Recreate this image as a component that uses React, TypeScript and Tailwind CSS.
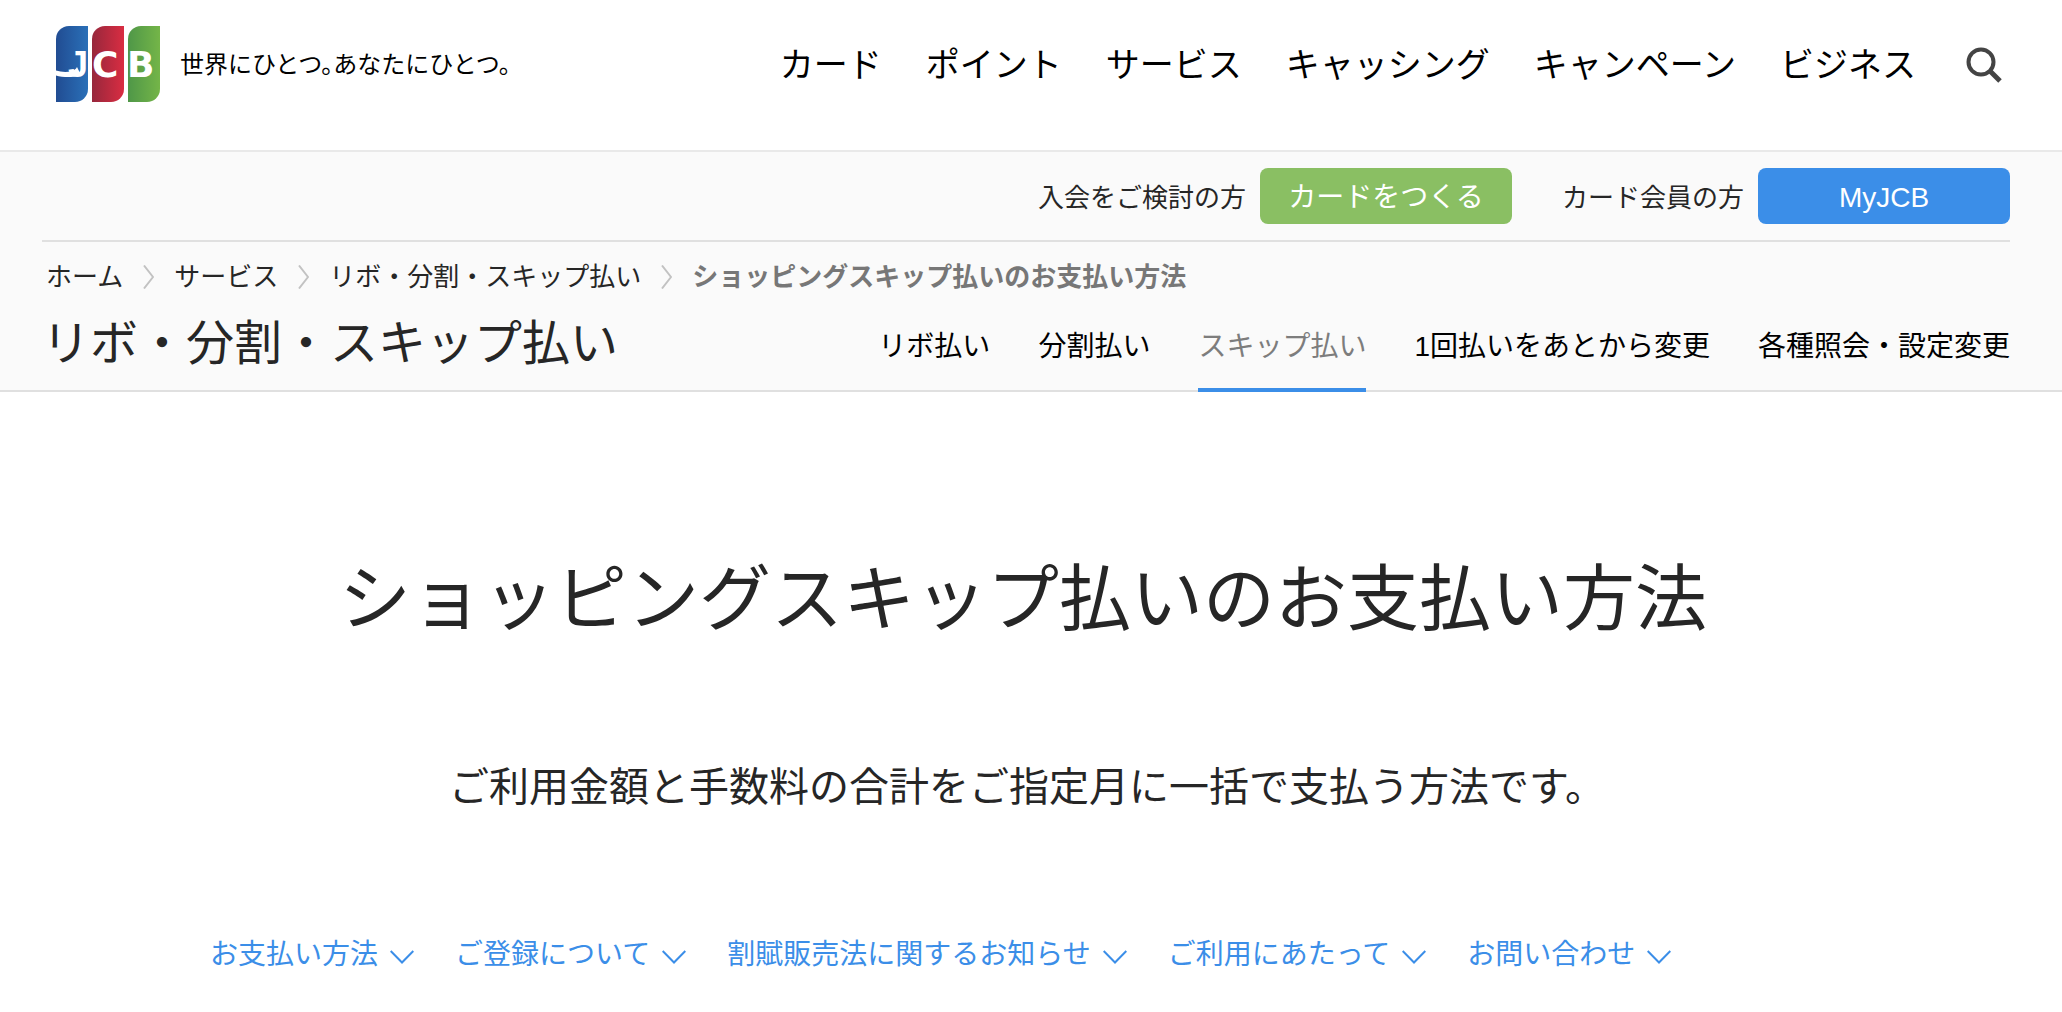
import { Fragment, type ReactNode } from "react";

const mainNav = ["カード", "ポイント", "サービス", "キャッシング", "キャンペーン", "ビジネス"];
const crumbs = ["ホーム", "サービス", "リボ・分割・スキップ払い"];
const tabs = ["リボ払い", "分割払い", "スキップ払い", "1回払いをあとから変更", "各種照会・設定変更"];
const anchors = [
  "お支払い方法",
  "ご登録について",
  "割賦販売法に関するお知らせ",
  "ご利用にあたって",
  "お問い合わせ",
];

function Gradient({ id, from, to }: { id: string; from: string; to: string }) {
  return (
    <linearGradient id={id} x1="0" x2="1" y1="0" y2="0">
      <stop offset="0" stopColor={from} />
      <stop offset="1" stopColor={to} />
    </linearGradient>
  );
}

function Logo() {
  return (
    <svg
      width="104"
      height="76"
      viewBox="0 0 104 76"
      role="img"
      aria-label="JCB"
      className="shrink-0 text-[36px] font-bold"
      fill="#fff"
    >
      <defs>
        <Gradient id="logo-blue" from="#214c92" to="#2a70b8" />
        <Gradient id="logo-red" from="#97273c" to="#d92d42" />
        <Gradient id="logo-green" from="#4f9748" to="#74b548" />
      </defs>
      <path d="M13 0h19v63a13 13 0 0 1-13 13H0V13A13 13 0 0 1 13 0Z" fill="url(#logo-blue)" />
      <path d="M49 0h19v63a13 13 0 0 1-13 13H36V13A13 13 0 0 1 49 0Z" fill="url(#logo-red)" />
      <path d="M85 0h19v63a13 13 0 0 1-13 13H72V13A13 13 0 0 1 85 0Z" fill="url(#logo-green)" />
      <path d="M0 44.500c5 1.500 11 2 16 .5 2-.6 4-2 5-4l3 6c-2 3-5 4-9 4-5 .3-11-.3-15-1.500Z" />
      <text x="12" y="51" className="font-['Liberation_Sans']">J</text>
      <text x="36" y="51" className="font-['DejaVu_Sans']">C</text>
      <text x="71" y="51" className="font-['DejaVu_Sans']">B</text>
    </svg>
  );
}

function Separator() {
  return (
    <svg width="11" height="24" viewBox="0 0 11 24" fill="none" stroke="#c2c2c2" strokeWidth="2" aria-hidden="true">
      <path d="M1 .5 10 12 1 23.500" />
    </svg>
  );
}

function ChevronDown() {
  return (
    <svg width="24" height="14" viewBox="0 0 24 14" fill="none" stroke="#3b8ee8" strokeWidth="2" aria-hidden="true" className="mt-1">
      <path d="M.7 1 12 12.500 23.300 1" />
    </svg>
  );
}

function Entry({ label, children, color }: { label: string; children: ReactNode; color: string }) {
  return (
    <div className="flex items-center gap-3.5">
      <span className="pt-1 text-[26px] leading-9">{label}</span>
      <a href="#" className={`flex h-14 w-[252px] items-center justify-center rounded-lg pt-1 text-[28px] text-white ${color}`}>
        {children}
      </a>
    </div>
  );
}

export default function App() {
  return (
    <div
      lang="ja"
      className="min-h-screen bg-white font-['Liberation_Sans','Noto_Sans_CJK_JP',sans-serif] whitespace-nowrap text-[#262626]"
    >
      <header>
        <div className="flex h-[150px] items-start justify-between pr-[60px] pl-14">
          <a href="#" className="mt-[26px] flex items-center gap-5 text-black">
            <Logo />
            <span className="pt-0.5 text-[24px] leading-9 [font-feature-settings:'halt']">世界にひとつ。あなたにひとつ。</span>
          </a>
          <div className="mt-[41px] flex items-center gap-[50px]">
            <nav aria-label="メイン">
              <ul className="flex gap-11 text-[34px] leading-[48px] text-black">
                {mainNav.map((item) => (
                  <li key={item}>
                    <a href="#">{item}</a>
                  </li>
                ))}
              </ul>
            </nav>
            <button type="button" aria-label="検索">
              <svg width="36" height="36" viewBox="0 0 36 36" fill="none" stroke="#444" strokeWidth="4">
                <circle cx="15" cy="15" r="12.500" />
                <path d="m24 24 10 10" strokeWidth="5" />
              </svg>
            </button>
          </div>
        </div>

        <div className="border-y-2 border-t-[#e9e9e9] border-b-[#e0e0e0] bg-[#fafafa] pr-[52px] pl-[42px]">
          <div className="flex justify-end gap-[50px] border-b-2 border-[#e0e0e0] py-4">
            <Entry label="入会をご検討の方" color="bg-[#8abf63]">
              カードをつくる
            </Entry>
            <Entry label="カード会員の方" color="bg-[#3b8ee8]">
              MyJCB
            </Entry>
          </div>

          <nav aria-label="パンくず" className="flex h-[68px] items-center gap-5 pt-0.5 pl-1 text-[26px] leading-9">
            {crumbs.map((item) => (
              <Fragment key={item}>
                <a href="#">{item}</a>
                <Separator />
              </Fragment>
            ))}
            <span aria-current="page" className="font-bold text-[#777]">
              ショッピングスキップ払いのお支払い方法
            </span>
          </nav>

          <div className="flex h-20 items-end justify-between">
            <p className="pb-4 text-[48px] leading-[60px]">リボ・分割・スキップ払い</p>
            <nav aria-label="お支払い" className="-mb-0.5 flex gap-12 text-[28px] leading-9 text-black">
              {tabs.map((item) => (
                <a
                  key={item}
                  href="#"
                  className={
                    item === "スキップ払い"
                      ? "border-b-4 border-[#3b8ee8] pb-[23px] text-[#7d7d7d]"
                      : "border-b-4 border-transparent pb-[23px]"
                  }
                >
                  {item}
                </a>
              ))}
            </nav>
          </div>
        </div>
      </header>

      <main>
        <h1 className="mt-[159px] mr-4 text-center text-[72px] leading-[96px]">
          ショッピングスキップ払いのお支払い方法
        </h1>
        <p className="mt-28 mr-2 text-center text-[40px] leading-[56px]">
          ご利用金額と手数料の合計をご指定月に一括で支払う方法です。
        </p>
        <nav aria-label="ページ内" className="mt-[122px] flex gap-[41px] pl-[210px] text-[28px] leading-9 text-[#3b8ee8]">
          {anchors.map((item) => (
            <a key={item} href="#" className="flex items-center gap-3">
              {item}
              <ChevronDown />
            </a>
          ))}
        </nav>
      </main>
    </div>
  );
}
